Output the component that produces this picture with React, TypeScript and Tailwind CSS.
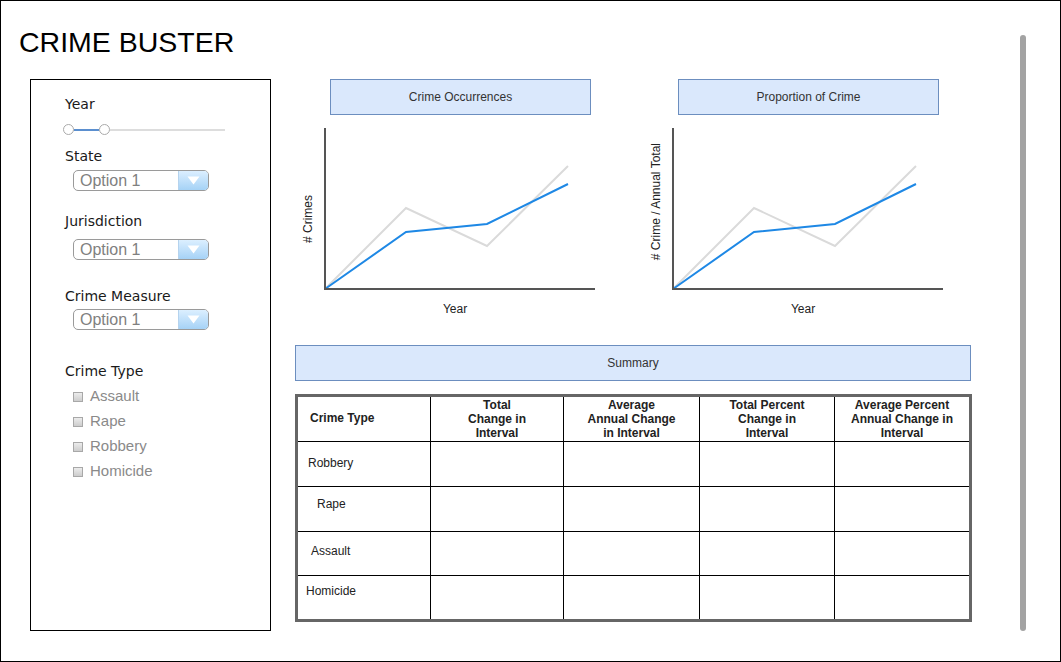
import React from "react";

const sans = "font-['Liberation_Sans',Arial,sans-serif]";
const verdana = "font-['DejaVu_Sans',Verdana,sans-serif]";

const Dropdown = () => (
  <div className="ml-[8px] w-[136px] h-[21px] rounded-[5px] border border-[#9a9a9a] flex overflow-hidden bg-white">
    <div className={`flex-1 pl-[6px] text-[16px] leading-[19px] text-[#808080] ${sans}`}>Option 1</div>
    <div className="w-[30px] border-l border-[#b5d3ee] bg-linear-to-b from-[#dcefff] to-[#a5d2f6] flex items-center justify-center">
      <svg width="13" height="9" viewBox="0 0 13 9">
        <polygon points="0.5,0.5 12.5,0.5 6.5,8.5" fill="#ffffff" />
      </svg>
    </div>
  </div>
);

const Label = ({ children, className = "" }: { children: React.ReactNode; className?: string }) => (
  <div className={`text-[14px] leading-[17px] text-[#1a1a1a] ${verdana} ${className}`}>{children}</div>
);

const Sidebar = () => (
  <div className="w-[241px] h-[552px] border border-black pl-[34px] pt-[16px] shrink-0">
    <Label>Year</Label>
    {/* range slider */}
    <div className="mt-[11px] h-[11px] w-[162px] flex items-center -ml-[2px]">
      <div className="w-[11px] h-[11px] rounded-full border border-[#aaa] bg-white" />
      <div className="w-[25px] h-[2px] bg-[#5b8fcf]" />
      <div className="w-[11px] h-[11px] rounded-full border border-[#aaa] bg-white" />
      <div className="flex-1 h-[2px] bg-[#dddddd]" />
    </div>
    <Label className="mt-[13px]">State</Label>
    <div className="mt-[5px]">
      <Dropdown />
    </div>
    <Label className="mt-[22px]">Jurisdiction</Label>
    <div className="mt-[9px]">
      <Dropdown />
    </div>
    <Label className="mt-[28px]">Crime Measure</Label>
    <div className="mt-[4px]">
      <Dropdown />
    </div>
    <Label className="mt-[33px]">Crime Type</Label>
    <div className="mt-[4px] flex flex-col">
      {["Assault", "Rape", "Robbery", "Homicide"].map((c) => (
        <div key={c} className="h-[25px] flex items-center ml-[8px]">
          <div className="w-[10px] h-[10px] border border-[#a8a8a8] bg-linear-to-b from-[#ececec] to-[#cdcdcd]" />
          <span className={`ml-[7px] text-[15px] text-[#8a8a8a] ${sans}`}>{c}</span>
        </div>
      ))}
    </div>
  </div>
);

const Chart = ({ title, yLabel, labelPad, width }: { title: string; yLabel: string; labelPad: string; width: string }) => (
  <div className={`${width} shrink-0`}>
    <div className={`ml-[35px] w-[261px] h-[36px] border border-[#6c8ebf] bg-[#dae8fc] flex items-center justify-center text-[12px] text-[#333] ${sans}`}>
      {title}
    </div>
    <div className="flex mt-[11px]">
      <div className={`w-[26px] h-[170px] flex justify-center items-center ${labelPad}`}>
        <span className={`[writing-mode:vertical-rl] rotate-180 text-[12px] text-[#222] whitespace-nowrap ${sans}`}>{yLabel}</span>
      </div>
      <svg width="282" height="170" className="ml-[2px]">
        <polyline points="2,163 83,82 164,120 245,40" fill="none" stroke="#dadada" strokeWidth="2" />
        <polyline points="2,163 83,106 164,98 245,58" fill="none" stroke="#1e88e5" strokeWidth="2" />
        <line x1="2" y1="2" x2="2" y2="164" stroke="#555" strokeWidth="2" />
        <line x1="1" y1="163" x2="272" y2="163" stroke="#555" strokeWidth="2" />
      </svg>
    </div>
    <div className={`ml-[28px] w-[264px] mt-[4px] text-center text-[12px] text-[#222] ${sans}`}>Year</div>
  </div>
);

const rows = [
  { name: "Robbery", pl: "pl-[10px]", pt: "pt-[14px]", h: "h-[45px]" },
  { name: "Rape", pl: "pl-[19px]", pt: "pt-[10px]", h: "h-[45px]" },
  { name: "Assault", pl: "pl-[13px]", pt: "pt-[12px]", h: "h-[44px]" },
  { name: "Homicide", pl: "pl-[8px]", pt: "pt-[8px]", h: "h-[45px]" },
];

const SummaryTable = () => (
  <table className={`mt-[13px] w-[674px] table-fixed border-collapse border-[3px] border-[#666] text-[12px] text-[#222] ${sans}`}>
    <colgroup>
      <col className="w-[134px]" />
      <col className="w-[133px]" />
      <col className="w-[136px]" />
      <col className="w-[135px]" />
      <col className="w-[136px]" />
    </colgroup>
    <thead>
      <tr className="h-[46px]">
        <th className="border border-black text-left pl-[12px] pb-[3px] font-bold align-middle">Crime Type</th>
        <th className="border border-black font-bold leading-[14px] align-middle">Total<br />Change in<br />Interval</th>
        <th className="border border-black font-bold leading-[14px] align-middle">Average<br />Annual Change<br />in Interval</th>
        <th className="border border-black font-bold leading-[14px] align-middle">Total Percent<br />Change in<br />Interval</th>
        <th className="border border-black font-bold leading-[14px] align-middle">Average Percent<br />Annual Change in<br />Interval</th>
      </tr>
    </thead>
    <tbody>
      {rows.map((r) => (
        <tr key={r.name} className={r.h}>
          <td className={`border border-black align-top leading-[14px] ${r.pl} ${r.pt}`}>{r.name}</td>
          <td className="border border-black" />
          <td className="border border-black" />
          <td className="border border-black" />
          <td className="border border-black" />
        </tr>
      ))}
    </tbody>
  </table>
);

export default function App() {
  return (
    <div className="relative w-[1061px] h-[662px] border border-black bg-white overflow-hidden">
      <div className={`h-[78px] pl-[18px] pt-[25px] text-[28.5px] leading-[32px] text-black ${sans}`}>CRIME BUSTER</div>
      <div className="flex pl-[29px]">
        <Sidebar />
        <div className="ml-[24px] w-[676px]">
          <div className="flex h-[266px]">
            <Chart title="Crime Occurrences" yLabel="# Crimes" labelPad="pt-[16px]" width="w-[348px]" />
            <Chart title="Proportion of Crime" yLabel="# Crime / Annual Total" labelPad="pb-[18px]" width="w-[328px]" />
          </div>
          <div className={`h-[36px] border border-[#6c8ebf] bg-[#dae8fc] flex items-center justify-center text-[12px] text-[#333] ${sans}`}>
            Summary
          </div>
          <SummaryTable />
        </div>
      </div>
      <div className="absolute left-[1019px] top-[34px] w-[6px] h-[596px] rounded-full bg-[#a3a3a3]" />
    </div>
  );
}
